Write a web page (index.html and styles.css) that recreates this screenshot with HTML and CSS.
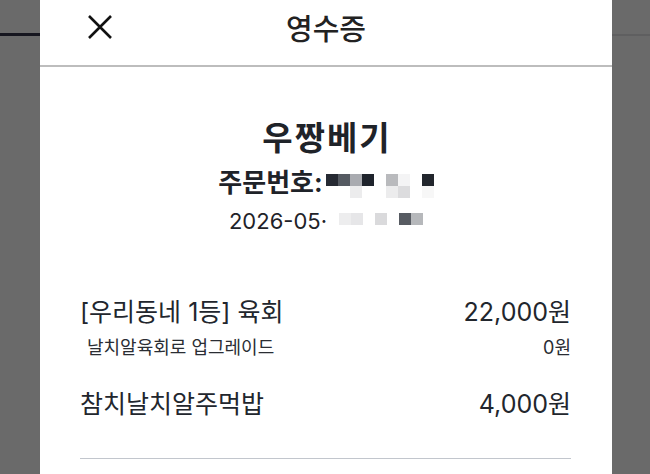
FILE: index.html
```html
<!DOCTYPE html>
<html lang="ko">
<head>
    <meta charset="UTF-8">
    <meta name="viewport" content="width=device-width, initial-scale=1.0">
    <title>영수증</title>
    <link rel="stylesheet" href="styles.css">
</head>
<body>
    <div class="backdrop">
        <div class="side side-left"><div class="side-line dark"></div></div>
        <div class="sheet">
            <div class="header">
                <button class="close" type="button" aria-label="닫기">
                    <svg width="26" height="26" viewBox="0 0 26 26"><path d="M2 2 L24 24 M24 2 L2 24" stroke="#111" stroke-width="2.6" fill="none"/></svg>
                </button>
                <h1>영수증</h1>
            </div>
            <div class="shop">
                <h2>우짱베기</h2>
                <div class="order-no">
                    <span>주문번호:</span>
                    <span class="mosaic">
                        <i style="background:#262a33"></i><i style="background:#555a62"></i><i style="background:#a9abb0"></i><i style="background:#1f242c"></i><i></i><i style="background:#b9babd"></i><i style="background:#f4f4f5"></i><i></i><i style="background:#22262d"></i>
                        <i></i><i></i><i style="background:#ececed"></i><i></i><i></i><i style="background:#ececed"></i><i style="background:#dcdcde"></i><i></i><i style="background:#f7f7f7"></i>
                    </span>
                </div>
                <div class="order-date">
                    <span>2026-05·</span>
                    <span class="mosaic small">
                        <i style="background:#ededee"></i><i style="background:#e6e6e8"></i><i></i><i style="background:#dadadc"></i><i></i><i style="background:#575b62"></i><i style="background:#b6b8bb"></i>
                    </span>
                </div>
            </div>
            <div class="items">
                <div class="item">
                    <div class="row main"><span>[우리동네 1등] 육회</span><span>22,000원</span></div>
                    <div class="row option"><span>날치알육회로 업그레이드</span><span>0원</span></div>
                </div>
                <div class="item">
                    <div class="row main"><span>참치날치알주먹밥</span><span>4,000원</span></div>
                </div>
            </div>
        </div>
        <div class="side side-right"><div class="side-line"></div></div>
    </div>
</body>
</html>
```
FILE: styles.css
```css
body {
    margin: 0;
    padding: 0;
    font-family: Inter, "Noto Sans CJK KR", sans-serif;
    color: #1f2329;
    background: #6a6a6a;
    overflow: hidden;
}
.backdrop {
    display: flex;
    height: 474px;
}
.side {
    background: #6a6a6a;
    padding-top: 33px;
}
.side-left {
    width: 40px;
}
.side-right {
    width: 38px;
    padding-top: 34px;
}
.side-line {
    height: 2px;
    background: #5f5f60;
}
.side-line.dark {
    height: 3px;
    background: #16161f;
}
.sheet {
    width: 572px;
    background: #fff;
}
.header {
    position: relative;
    height: 65px;
    border-bottom: 2px solid #bdbdbd;
    display: flex;
    align-items: center;
    justify-content: center;
}
.header h1 {
    margin: 0 0 12px;
    font-size: 29px;
    font-weight: 500;
    color: #222;
}
.close {
    position: absolute;
    left: 47px;
    top: 14px;
    padding: 0;
    border: none;
    background: none;
}
.close svg {
    display: block;
}
.shop {
    padding-top: 49px;
    text-align: center;
}
.shop h2 {
    margin: 0;
    padding-left: 2px;
    font-size: 33px;
    font-weight: 700;
    letter-spacing: 2px;
    line-height: 44px;
}
.order-no, .order-date {
    display: flex;
    justify-content: center;
    align-items: flex-start;
    line-height: 36px;
}
.order-no {
    margin-top: 5px;
    font-size: 26px;
    font-weight: 700;
    gap: 3px;
}
.order-date {
    margin-top: 2px;
    font-size: 22px;
    gap: 12px;
}
.mosaic {
    display: grid;
    grid-template-columns: repeat(9, 12px);
    grid-auto-rows: 12px;
    margin-top: 9px;
}
.mosaic.small {
    grid-template-columns: repeat(7, 12px);
    margin-top: 10px;
}
.items {
    display: flex;
    flex-direction: column;
    gap: 24px;
    margin: 54px 41px 0 40px;
    padding-bottom: 35px;
    border-bottom: 1px solid #c2c6cd;
}
.row {
    display: flex;
    justify-content: space-between;
}
.row.main {
    font-size: 25px;
    line-height: 38px;
    color: #22262d;
}
.row.option {
    margin-top: 4px;
    padding-left: 7px;
    font-size: 18px;
    line-height: 26px;
    color: #2a2d33;
}
```
